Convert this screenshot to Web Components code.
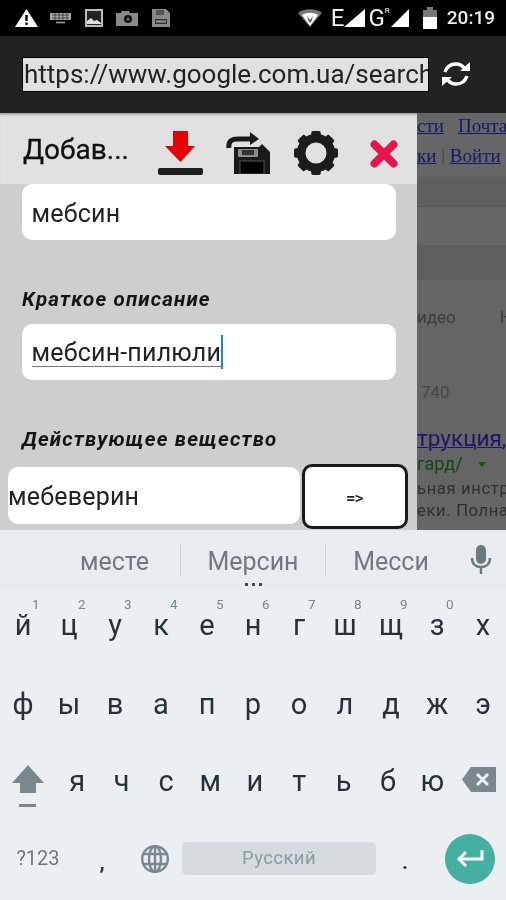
<!doctype html>
<html lang="ru">
<head>
<meta charset="utf-8">
<title>Добавить</title>
<style>
	html, body { margin: 0; padding: 0; background: #000; }
	body { width: 506px; height: 900px; overflow: hidden; font-family: Roboto, "Liberation Sans", sans-serif; filter: blur(.4px); }
	.middle { display: flex; height: 417px; }
</style>
</head>
<body>
<status-bar></status-bar>
<url-bar value="https://www.google.com.ua/search?"></url-bar>
<div class="middle">
	<add-panel>
		<form-field value="мебсин" first></form-field>
		<form-field label="Краткое описание" value="мебсин-пилюли" focused></form-field>
		<form-field label="Действующее вещество" value="мебеверин" action="=>"></form-field>
	</add-panel>
	<page-backdrop></page-backdrop>
</div>
<soft-keyboard></soft-keyboard>

<script>
class StatusBar extends HTMLElement {
	constructor() {
		super()
		this.attachShadow({ mode: 'open' })
		this.shadowRoot.innerHTML = `
			<style>
				:host { display: flex; align-items: center; height: 36px; background: #000; color: #fff; padding: 0 11px 0 15px; box-sizing: border-box; }
				.left, .right { display: flex; align-items: center; }
				.right { margin-left: auto; }
				svg { display: block; }
				.net { font: 400 24px/24px Roboto, sans-serif; color: #f2f2f2; }
				.r { font: 400 8px/8px Roboto, sans-serif; align-self: flex-start; margin: 1px 0 0 0; }
				.time { font: 500 19px/24px Roboto, sans-serif; color: #eee; margin-left: 10px; }
			</style>
			<div class="left">
				<svg width="23" height="20" viewBox="0 0 23 20"><path d="M11.5 1 23 19H0Z" fill="#fff"/><rect x="10.3" y="7" width="2.4" height="6" fill="#000"/><rect x="10.3" y="14.5" width="2.4" height="2.4" fill="#000"/></svg>
				<svg style="margin-left:12px" width="21" height="12" viewBox="0 0 21 12"><rect x="0" y="1" width="21" height="7" rx="1" fill="#aaa"/><path d="M2 3h17M2 6h17M5 1v7M9 1v7M13 1v7M17 1v7" stroke="#333" stroke-width=".8"/><path d="M6 10.5h9" stroke="#999" stroke-width="1.6"/></svg>
				<svg style="margin-left:14px" width="18" height="18" viewBox="0 0 18 18"><rect x="1" y="1" width="16" height="16" fill="#222" stroke="#bbb" stroke-width="2"/><path d="M2 15V12l4-3 3 3 3-1 4 3v1Z" fill="#ddd"/></svg>
				<svg style="margin-left:13px" width="22" height="16" viewBox="0 0 22 16"><path d="M0 3h5l1-2h7l1 2h8v13H0Z" fill="#8a8a8a"/><circle cx="12" cy="9" r="4" fill="#111"/><circle cx="12" cy="9" r="1.6" fill="#777"/></svg>
				<svg style="margin-left:14px" width="18" height="18" viewBox="0 0 18 18"><path d="M0 0h14l4 4v14H0Z" fill="#8a8a8a"/><rect x="4" y="1" width="8" height="5" fill="#555"/><rect x="3" y="10" width="12" height="5" fill="#333"/><rect x="4" y="11.5" width="10" height="2" fill="#999"/></svg>
			</div>
			<div class="right">
				<svg width="24" height="20" viewBox="0 0 24 20"><path d="M0 5C6 0 18 0 24 5L12 19Z" fill="#777"/><path d="M4 7C9 4 15 4 20 7L12 18Z" fill="#fff"/><path d="M9 8l3 4 3-4-1.500 5L12 15l-1.500-2Z" fill="#555"/></svg>
				<span class="net" style="margin-left:9px">E</span>
				<svg width="23" height="20" viewBox="0 0 23 20" style="margin-left:-1px"><path d="M22 1V19H1Z" fill="#fff"/></svg>
				<span class="net" style="margin-left:2px">G</span><span class="r">R</span>
				<svg width="20" height="20" viewBox="0 0 20 20"><path d="M19 1V19H1Z" fill="#fff"/></svg>
				<svg style="margin-left:13px" width="14" height="22" viewBox="0 0 14 22"><path d="M4 0h6v3h4v19H0V3h4Z" fill="#777"/><rect x="0" y="10" width="14" height="12" fill="#fff"/></svg>
				<span class="time">20:19</span>
			</div>
		`
	}
}

class UrlBar extends HTMLElement {
	constructor() {
		super()
		this.attachShadow({ mode: 'open' })
	}

	connectedCallback() {
		this.shadowRoot.innerHTML = `
			<style>
				:host { display: flex; align-items: center; height: 77px; background: #222; padding: 0 0 1px 22px; box-sizing: border-box; }
				.field { width: 407px; height: 35px; background: #e0e0e0; border: 1px solid #000; box-sizing: border-box; overflow: hidden; white-space: nowrap; font: 400 26px/33px Roboto, sans-serif; color: #222; padding-left: 1px; }
				svg { display: block; margin-left: 12px; }
			</style>
			<div class="field">${this.getAttribute('value')}</div>
			<svg width="30" height="26" viewBox="0 0 30 26" fill="none" stroke="#fff" stroke-width="3.400">
				<path d="M4 11C6 5 10 3 15 3c4 0 7 2 9 5"/>
				<path d="M26 15c-2 6-6 8-11 8-4 0-7-2-9-5"/>
				<path d="M19 10h10V1Z" fill="#fff" stroke="none"/>
				<path d="M11 16H1v9Z" fill="#fff" stroke="none"/>
			</svg>
		`
	}
}

class AddPanel extends HTMLElement {
	constructor() {
		super()
		this.attachShadow({ mode: 'open' })
		const teeth = [0, 45, 90, 135, 180, 225, 270, 315]
			.map(a => `<rect x="18" y="0" width="10" height="10" rx="2" fill="#1c1c1c" transform="rotate(${a} 23 23)"/>`)
			.join('')
		this.shadowRoot.innerHTML = `
			<style>
				:host { display: flex; flex-direction: column; width: 417px; height: 417px; background: #cecece; overflow: hidden; flex: none; }
				header { display: flex; align-items: center; height: 71px; background: #e1e1e1; box-sizing: border-box; padding: 2px 0 0 23px; box-shadow: inset 0 3px 3px -2px #888; flex: none; }
				h1 { margin: 0; width: 135px; font: 400 28px/36px Roboto, sans-serif; color: #111; flex: none; -webkit-text-stroke: .3px #111; }
				svg { display: block; flex: none; margin-top: 7px; }
				.body { padding: 0; }
			</style>
			<header>
				<h1>Добав...</h1>
				<svg width="45" height="46" viewBox="0 0 45 46">
					<path d="M15 1H30V16H37L22.500 32 7 16H15Z" fill="#e60000"/>
					<rect x="0" y="38" width="45" height="7" rx="2" fill="#1d1d1d"/>
				</svg>
				<svg style="margin-left:23px" width="44" height="42" viewBox="0 0 44 42">
					<path d="M3 16C2 9 6 7 12 7H25" fill="none" stroke="#1a1a1a" stroke-width="5"/>
					<path d="M24 0 33 7 24 13Z" fill="#1a1a1a"/>
					<path d="M8 15H33L36 12 44 20V42H8Z" fill="#1a1a1a"/>
					<rect x="12" y="17" width="20" height="8" fill="#8c8c8c"/>
					<rect x="16" y="18" width="12" height="5" fill="#333"/>
					<rect x="14" y="29" width="24" height="13" fill="#000" stroke="#555"/>
				</svg>
				<svg style="margin-left:24px" width="44" height="44" viewBox="0 0 46 46">
					${teeth}
					<circle cx="23" cy="23" r="15.500" fill="none" stroke="#1c1c1c" stroke-width="9"/>
				</svg>
				<svg style="margin:9px 0 0 31px" width="30" height="30" viewBox="0 0 30 30">
					<path d="M5.500 5.500 24.500 24.500M24.500 5.500 5.500 24.500" stroke="#e8134f" stroke-width="8" stroke-linecap="round"/>
				</svg>
			</header>
			<div class="body"><slot></slot></div>
		`
	}
}

class FormField extends HTMLElement {
	constructor() {
		super()
		this.attachShadow({ mode: 'open' })
	}

	connectedCallback() {
		const label = this.getAttribute('label')
		const value = this.getAttribute('value')
		const action = this.getAttribute('action')
		const focused = this.hasAttribute('focused')
		this.shadowRoot.innerHTML = `
			<style>
				:host { display: block; padding: 0 21px 0 22px; }
				label { display: block; margin: 47px 0 13px; font: italic 700 20.500px/24px Roboto, sans-serif; color: #151515; letter-spacing: 1.150px; }
				.input { display: flex; align-items: center; height: 56px; box-sizing: border-box; padding-top: 3px; background: #fff; border-radius: 10px; padding-left: 9.500px; font: 400 25px/30px Roboto, sans-serif; color: #222; letter-spacing: .2px; }
				.typed { border-bottom: ${focused ? '1px solid #777' : '0'}; line-height: ${focused ? '26px' : '28px'}; margin-top: ${focused ? '-1px' : '0'}; }
				.caret { width: 2px; height: 34px; background: #16958a; margin-top: -3px; }
				.row { display: flex; align-items: center; margin: 0 -12px 0 -14px; gap: 2px; }
				.row .input { width: 292px; height: 57px; padding-left: 0; flex: none; margin-bottom: 2px; }
				button { width: 106px; height: 65px; flex: none; box-sizing: border-box; background: #fff; border: 3px solid #1a1a1a; border-radius: 10px; padding: 3px 0 0; font: 700 14px/16px "DejaVu Sans Mono", monospace; color: #222; }
			</style>
			${label ? `<label>${label}</label>` : ''}
			${action
				? `<div class="row"><div class="input">${value}</div><button type="button">${action.replace('>', '&gt;')}</button></div>`
				: `<div class="input"><span class="typed">${value}</span>${focused ? '<span class="caret"></span>' : ''}</div>`}
		`
	}
}

class PageBackdrop extends HTMLElement {
	constructor() {
		super()
		this.attachShadow({ mode: 'open' })
		this.shadowRoot.innerHTML = `
			<style>
				:host { display: block; flex: 1; height: 417px; background: #656565; overflow: hidden; white-space: nowrap; }
				.band { display: flex; align-items: center; box-sizing: border-box; }
				a { color: #17176b; text-decoration: underline; font: 400 19px/20px "Liberation Serif", serif; }
				.top { height: 64px; background: #666; flex-direction: column; align-items: flex-start; padding-top: 3px; }
				.top div { height: 30px; line-height: 20px; display: flex; gap: 14px; }
				.sep { color: #444; font: 400 17px/20px "Liberation Serif", serif; margin: 0 -9px; }
				.dark { height: 30px; background: #5f5f5f; border-bottom: 1px solid #585858; }
				.mid { height: 38px; background: #666; }
				.dark2 { height: 35px; background: #5e5e5e; }
				.tabs { height: 74px; gap: 44px; color: #3c3c3c; font: 400 17px/20px Roboto, sans-serif; }
				.count { height: 54px; padding-left: 4px; color: #484848; font: 400 17px/20px Roboto, sans-serif; padding-top: 22px; }
				.title { height: 42px; color: #1f1470; font: 400 22.500px/24px Roboto, sans-serif; text-decoration: underline; text-decoration-thickness: 1px; align-items: flex-end; }
				.url { height: 26px; color: #0e4a14; font: 400 18px/22px Roboto, sans-serif; gap: 15px; padding-top: 2px; }
				.url i { width: 0; height: 0; border: 4px solid transparent; border-top: 5px solid #0e5a14; border-bottom: 0; }
				.text { height: 22px; color: #303030; font: 400 16.500px/20px Roboto, sans-serif; letter-spacing: .7px; position: relative; top: 2px; }
			</style>
			<div class="band top">
				<div><a>сти</a><a>Почта</a></div>
				<div><a>ки</a><span class="sep">|</span><a>Войти</a></div>
			</div>
			<div class="band dark"></div>
			<div class="band mid"></div>
			<div class="band dark2"></div>
			<div class="band tabs"><span>идео</span><span>Н</span></div>
			<div class="band count">740</div>
			<div class="band title">трукция,</div>
			<div class="band url"><span>гард/</span><i></i></div>
			<div class="band text">ьная инстр</div>
			<div class="band text">еки. Полна</div>
		`
	}
}

class KbKey extends HTMLElement {
	constructor() {
		super()
		this.attachShadow({ mode: 'open' })
	}

	connectedCallback() {
		const hint = this.getAttribute('hint')
		this.shadowRoot.innerHTML = `
			<style>
				:host { display: flex; align-items: center; justify-content: center; position: relative; font: 400 29px/34px Roboto, sans-serif; color: #263238; }
				.hint { position: absolute; top: 6px; left: 50%; margin-left: 9px; font: 400 13.500px/16px Roboto, sans-serif; color: #7a868b; }
			</style>
			${hint ? `<span class="hint">${hint}</span>` : ''}
			<slot></slot>
		`
	}
}

class SoftKeyboard extends HTMLElement {
	constructor() {
		super()
		this.attachShadow({ mode: 'open' })
		const keys = (chars, hints = '') =>
			[...chars].map((c, i) => `<kb-key${hints[i] ? ` hint="${hints[i]}"` : ''}>${c}</kb-key>`).join('')
		this.shadowRoot.innerHTML = `
			<style>
				:host { display: block; height: 370px; background: #eceff1; }
				.strip { display: grid; grid-template-columns: 49px 132px 145px 130px 50px; align-items: center; height: 60px; background: #e8ecee; position: relative; font: 400 25px/30px Roboto, sans-serif; color: #6e7a80; text-align: center; }
				.strip span { display: block; padding-top: 3px; }
				.strip .bar { border-right: 1px solid #ccd2d5; height: 32px; display: flex; align-items: center; justify-content: center; box-sizing: border-box; padding-top: 3px; }
				.dots { position: absolute; left: 243px; bottom: 4px; width: 20px; height: 3px; background: radial-gradient(circle, #37474f 1.400px, transparent 1.600px) 0 0 / 7px 3px; }
				.row { display: grid; height: 77px; }
				.r1, .r2 { grid-template-columns: repeat(11, 46px); }
				.r1 kb-key { padding-bottom: 8px; }
				.r2 kb-key, .r3 kb-key { padding-bottom: 4px; }
				.r3 { grid-template-columns: 55px repeat(9, 44.400px) 51px; }
				.r4 { grid-template-columns: 76px 52px 54px 194px 58px 72px; height: 75px; }
				svg { display: block; }
				.center { display: flex; align-items: center; justify-content: center; }
				.sym { font: 400 20px/24px Roboto, sans-serif; color: #6e7a80; padding-bottom: 2px; }
				.space { height: 33px; align-self: center; border-radius: 5px; background: #d4dadd; color: #8f9a9f; font: 400 18.500px/33px Roboto, sans-serif; text-align: center; letter-spacing: .4px; }
				.punct { font-weight: 700; font-size: 21px; padding-top: 6px; color: #263238; }
				.enter { width: 50px; height: 50px; border-radius: 50%; background: #45b0a2; }
			</style>
			<div class="strip">
				<div></div>
				<span class="bar">месте</span>
				<span class="bar">Мерсин</span>
				<span>Месси</span>
				<div class="center">
					<svg width="22" height="30" viewBox="0 0 22 30" fill="none" stroke="#6e7a80" stroke-width="2.500"><rect x="6" y="0" width="10" height="19" rx="5" fill="#6e7a80" stroke="none"/><path d="M2 13c0 6 4 9 9 9s9-3 9-9M11 22v7"/></svg>
				</div>
				<i class="dots"></i>
			</div>
			<div class="row r1">${keys('йцукенгшщзх', '1234567890')}</div>
			<div class="row r2">${keys('фывапролджэ')}</div>
			<div class="row r3">
				<div class="center">
					<svg width="34" height="44" viewBox="0 0 34 44" fill="#7b878c" style="margin-top:8px"><path d="M17 0 33 18H25V28H9V18H1Z"/><rect x="8" y="39" width="17" height="3"/></svg>
				</div>
				${keys('ячсмитьбю')}
				<div class="center">
					<svg width="34" height="26" viewBox="0 0 34 26" style="margin:0 2px 6px 0"><path d="M9 0H34V25H9L0 12.500Z" fill="#7b878c"/><path d="M15 7 26 18M26 7 15 18" stroke="#eceff1" stroke-width="3"/></svg>
				</div>
			</div>
			<div class="row r4">
				<div class="center sym">?123</div>
				<kb-key class="punct">,</kb-key>
				<div class="center">
					<svg width="30" height="30" viewBox="0 0 30 30" fill="none" stroke="#7b878c" stroke-width="2.400"><circle cx="15" cy="15" r="12.800"/><ellipse cx="15" cy="15" rx="6" ry="12.800"/><path d="M15 2V28M3 10H27M3 20H27"/></svg>
				</div>
				<div class="space">Русский</div>
				<kb-key class="punct">.</kb-key>
				<div class="center">
					<div class="center enter">
						<svg width="28" height="20" viewBox="0 0 28 20" fill="none" stroke="#fff" stroke-width="3"><path d="M26 1V10H3M10 3 3 10 10 17"/></svg>
					</div>
				</div>
			</div>
		`
	}
}

customElements.define('status-bar', StatusBar)
customElements.define('url-bar', UrlBar)
customElements.define('add-panel', AddPanel)
customElements.define('form-field', FormField)
customElements.define('page-backdrop', PageBackdrop)
customElements.define('kb-key', KbKey)
customElements.define('soft-keyboard', SoftKeyboard)
</script>
</body>
</html>
